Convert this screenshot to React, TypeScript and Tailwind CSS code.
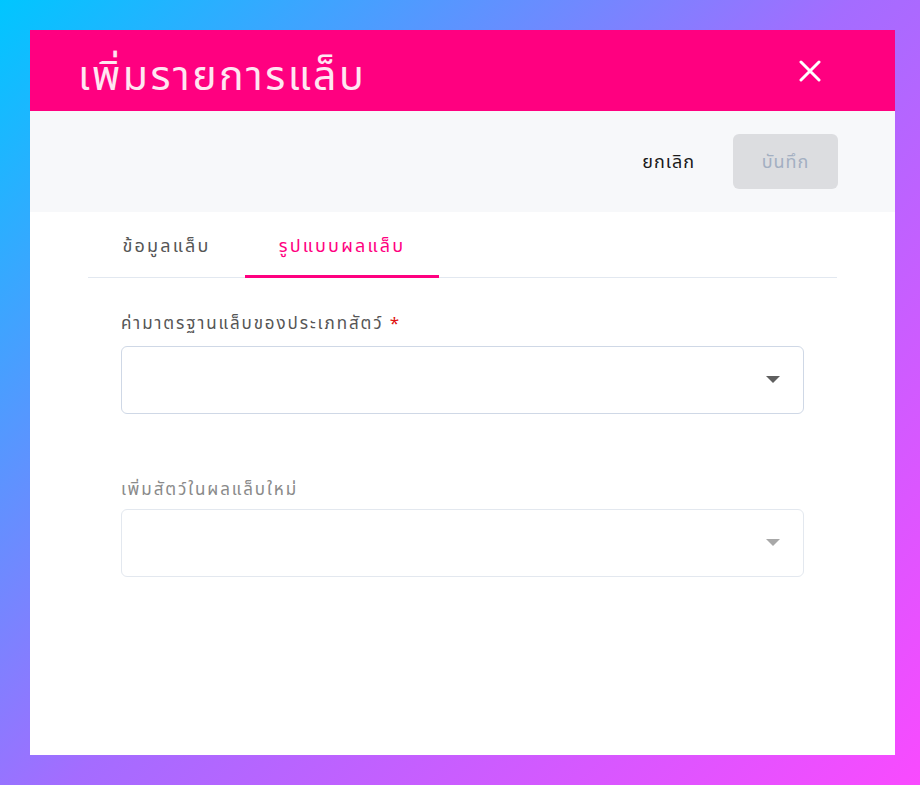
import React from "react";

const font = { fontFamily: '"Noto Sans", "Noto Sans Thai", "DejaVu Sans", sans-serif' };

function Caret({ light }: { light?: boolean }) {
  return (
    <svg width="14" height="8" viewBox="0 0 14 8" className="shrink-0">
      <path d="M0 0 L14 0 L7 7 Z" fill={light ? "#a8a8a8" : "#5f5f5f"} />
    </svg>
  );
}

export default function App() {
  return (
    <div
      className="w-[920px] h-[785px] p-[30px] pr-[25px] bg-[linear-gradient(135deg,#00c6ff_0%,#a46cff_50%,#f94aff_100%)]"
      style={font}
    >
      <div className="w-[865px] h-[725px] bg-white flex flex-col">
        <div className="h-[81px] bg-[#ff0080] flex items-center justify-between pl-[48px] pr-[74px]">
          <h1 className="text-[41px] text-[#ffe6f2] leading-none tracking-[2.5px] pt-[8px]">เพิ่มรายการแล็บ</h1>
          <svg width="22" height="22" viewBox="0 0 22 22">
            <path d="M2 2 L20 20 M20 2 L2 20" stroke="#ffffff" strokeWidth="3" strokeLinecap="round" />
          </svg>
        </div>
        <div className="h-[101px] bg-[#f7f8fa] flex items-center justify-end pr-[57px] gap-[38px]">
          <span className="text-[18px] tracking-[1px] text-[#1a1a1a]">ยกเลิก</span>
          <button className="w-[105px] h-[55px] rounded-[6px] bg-[#dcdde0] text-[18px] tracking-[1px] text-[#a3afc2]">บันทึก</button>
        </div>
        <div className="px-[58px]">
          <div className="flex border-b border-[#e2e8f0] h-[66px] items-stretch">
            <div className="w-[157px] flex items-center justify-center text-[18px] tracking-[2.2px] text-[#555555] pt-[2px]">ข้อมูลแล็บ</div>
            <div className="w-[194px] flex items-center justify-center text-[18px] tracking-[2.2px] text-[#ff0080] border-b-[3px] border-[#ff0080] mb-[-1px] pt-[4px]">รูปแบบผลแล็บ</div>
          </div>
        </div>
        <div className="px-[91px] pt-[33px]">
          <div className="text-[17px] tracking-[1.9px] text-[#555555] leading-[24px]">
            ค่ามาตรฐานแล็บของประเภทสัตว์ <span className="text-[#e01010]">*</span>
          </div>
          <div className="mt-[11px] h-[68px] w-[683px] rounded-[6px] border border-[#cfd8e6] flex items-center justify-end pr-[23px]">
            <Caret />
          </div>
          <div className="mt-[63px] text-[17px] tracking-[1.9px] text-[#8a8a8a] leading-[24px]">เพิ่มสัตว์ในผลแล็บใหม่</div>
          <div className="mt-[8px] h-[68px] w-[683px] rounded-[6px] border border-[#e3e8ef] flex items-center justify-end pr-[23px]">
            <Caret light />
          </div>
        </div>
      </div>
    </div>
  );
}
